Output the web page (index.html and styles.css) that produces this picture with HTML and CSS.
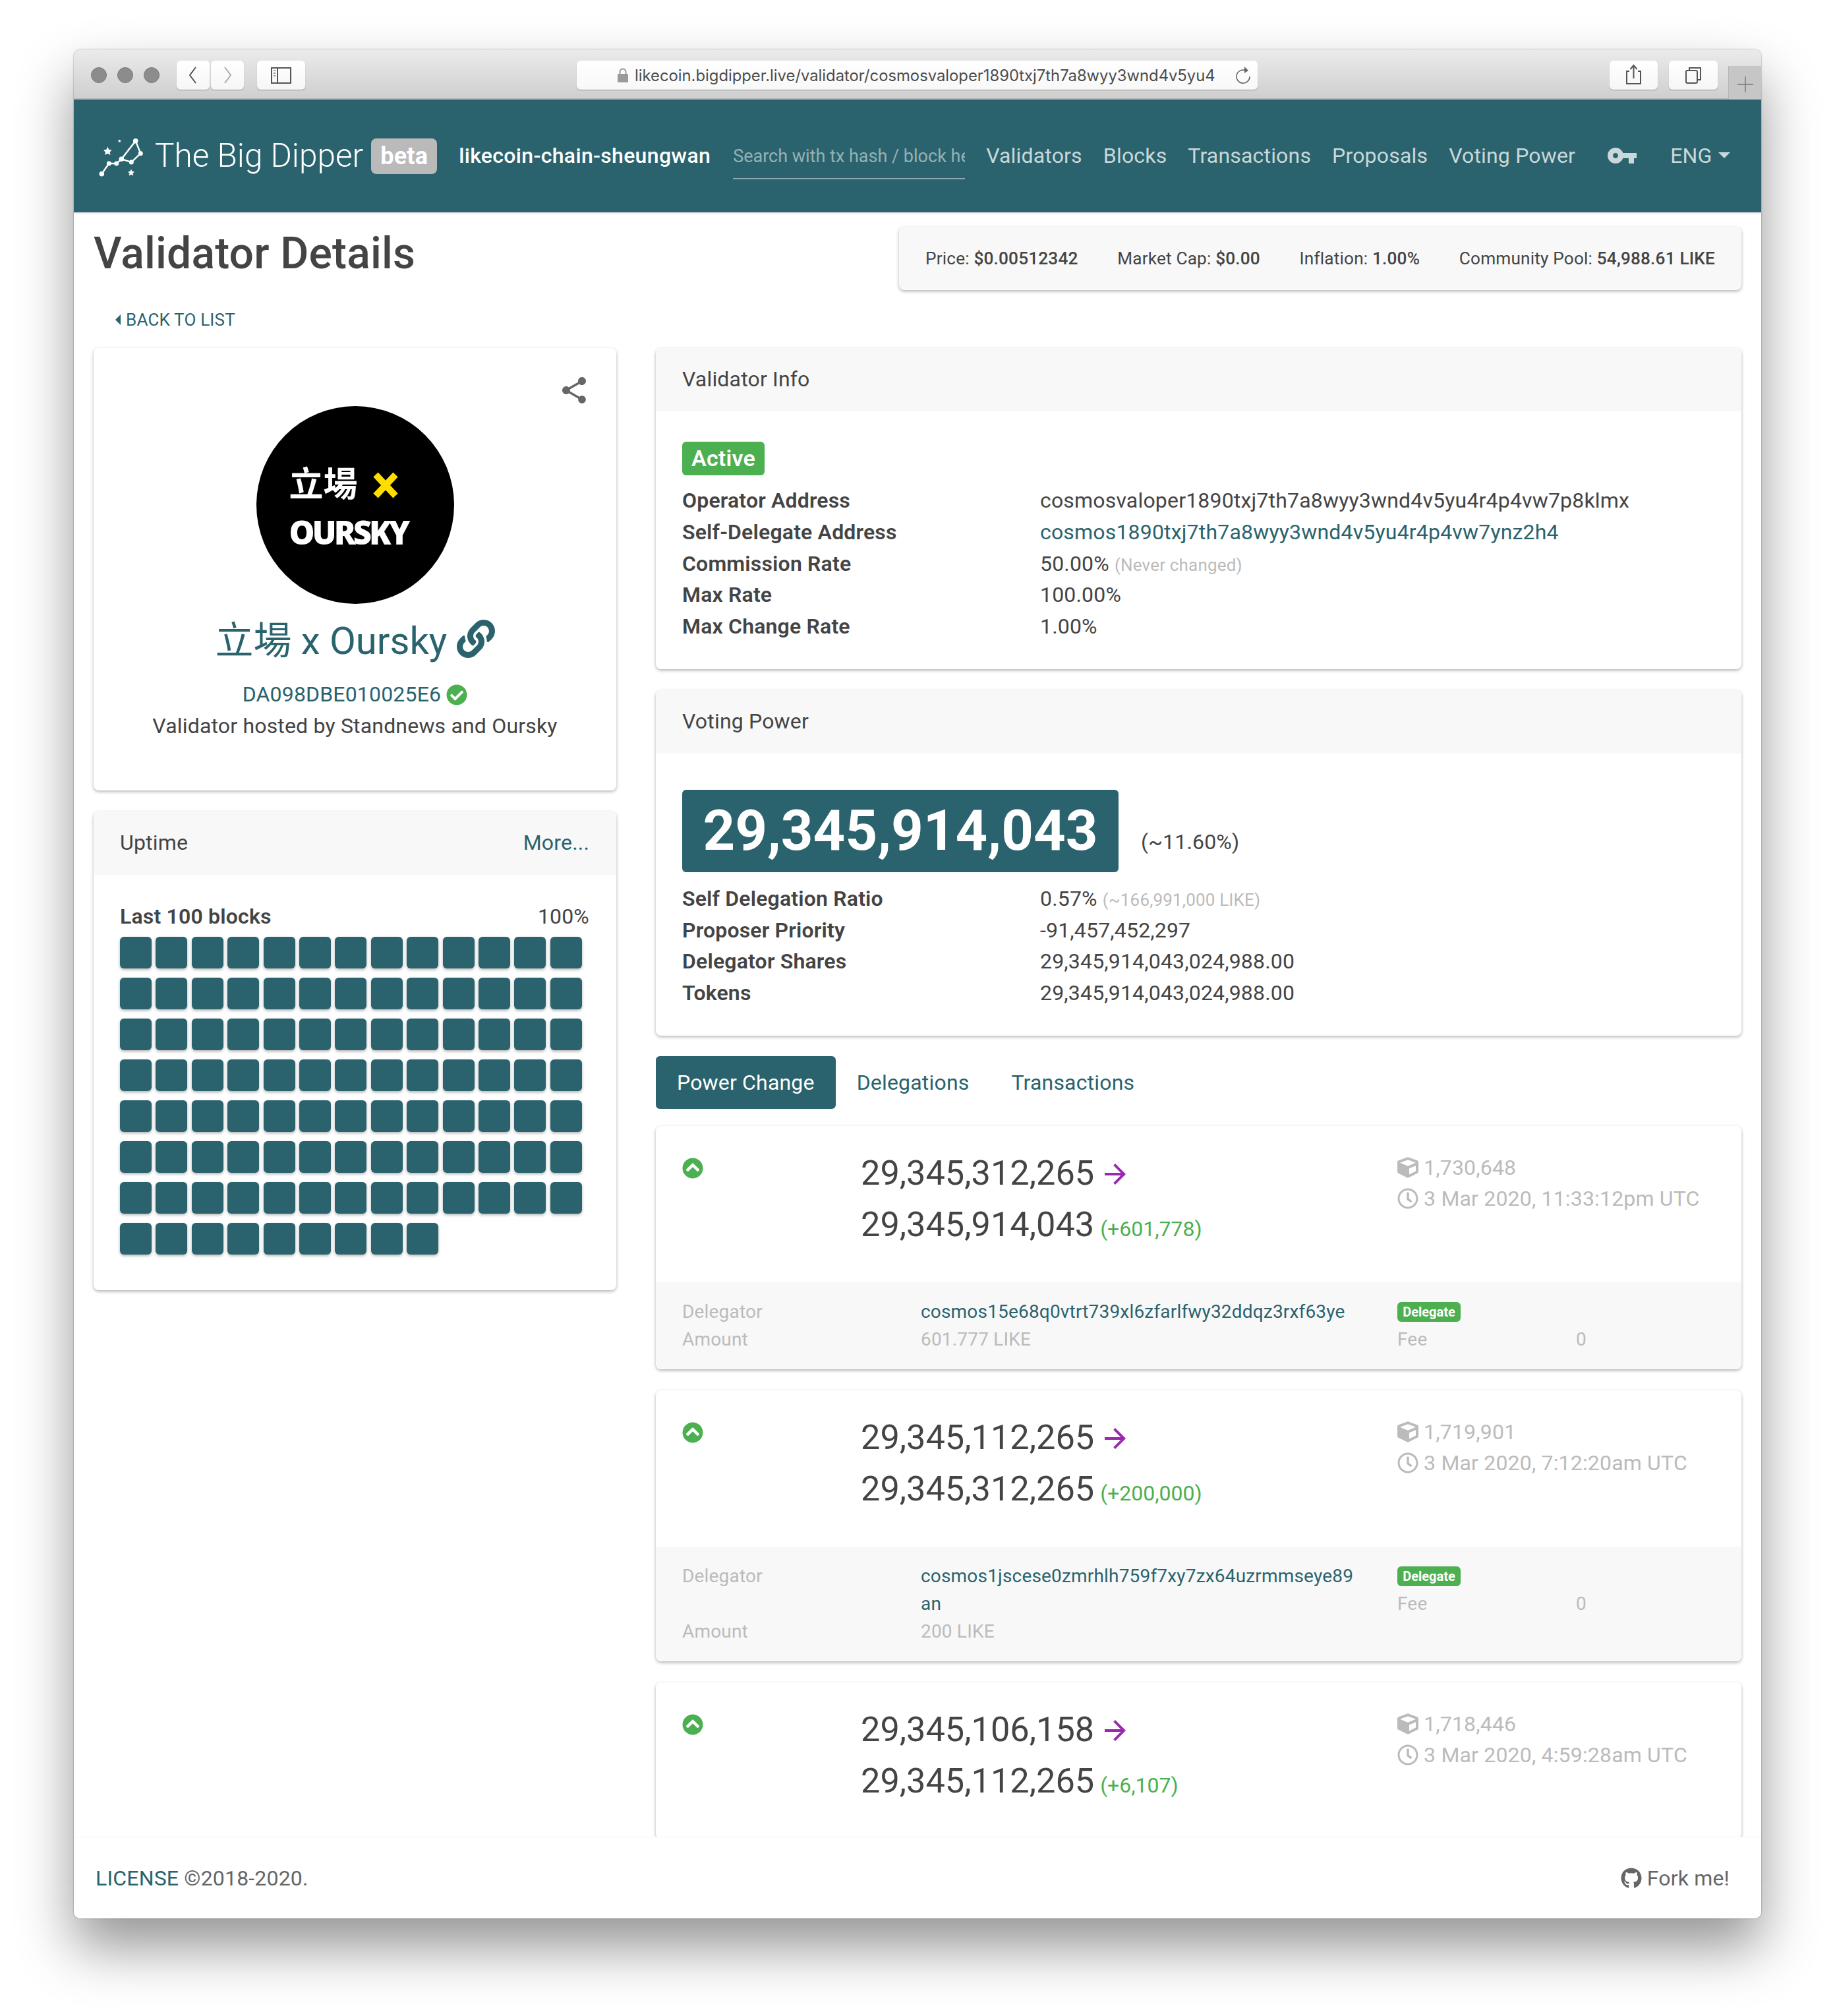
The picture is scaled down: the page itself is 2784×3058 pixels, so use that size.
FILE: index.html
```html
<!DOCTYPE html>
<html lang="en">
<head>
<meta charset="utf-8">
<title>Validator Details</title>
<link rel="stylesheet" href="styles.css">
</head>
<body>
<div class="window">
  <div class="toolbar">
    <div class="lights"><i></i><i></i><i></i></div>
    <div class="tb-btn tb-back"><svg width="50" height="44" viewBox="0 0 50 44"><path d="M29 10 L20 22 L29 34" fill="none" stroke="#555" stroke-width="2"/></svg></div>
    <div class="tb-btn tb-fwd"><svg width="50" height="44" viewBox="0 0 50 44"><path d="M21 10 L30 22 L21 34" fill="none" stroke="#aaa" stroke-width="2"/></svg></div>
    <div class="tb-btn tb-side"><svg width="73" height="44" viewBox="0 0 73 44"><rect x="22" y="11" width="29" height="23" fill="none" stroke="#555" stroke-width="2"/><path d="M31 11 V34" stroke="#555" stroke-width="2"/><path d="M25 15 H28 M25 19 H28 M25 23 H28" stroke="#999" stroke-width="2"/></svg></div>
    <div class="address">
      <svg class="lock" width="16" height="22" viewBox="0 0 16 22"><rect x="0" y="9" width="16" height="13" rx="1" fill="#9a9a9a"/><path d="M3.5 9 V6 a4.5 4.5 0 0 1 9 0 V9" fill="none" stroke="#9a9a9a" stroke-width="2"/></svg>
      <span class="url">likecoin.bigdipper.live/validator/cosmosvaloper1890txj7th7a8wyy3wnd4v5yu4r4p4vw7p8klmx</span>
      <svg class="reload" width="24" height="28" viewBox="0 0 24 28"><path d="M15 7 A10 10 0 1 0 21 16" fill="none" stroke="#666" stroke-width="1.6"/><path d="M13 1 L19 7 L13 11 Z" fill="#666"/></svg>
    </div>
    <div class="tb-btn tb-share"><svg width="73" height="44" viewBox="0 0 73 44"><path d="M30 16 H26 V35 H47 V16 H43" fill="none" stroke="#555" stroke-width="2"/><path d="M36.5 27 V8 M31.500 13 L36.500 7 L41.500 13" fill="none" stroke="#555" stroke-width="2"/></svg></div>
    <div class="tb-btn tb-tabs"><svg width="74" height="44" viewBox="0 0 74 44"><rect x="26" y="15" width="17" height="19" rx="2" fill="none" stroke="#555" stroke-width="2"/><path d="M31 15 V11 H48 V29 H43" fill="none" stroke="#555" stroke-width="2"/></svg></div>
    <div class="tb-plus"><svg width="24" height="24" viewBox="0 0 24 24"><path d="M12 0 V24 M0 12 H24" stroke="#777" stroke-width="1.500"/></svg></div>
  </div>

  <nav class="nav">
    <svg class="logo" width="90" height="80" viewBox="0 0 90 80">
      <path d="M14.300 66.700 L25.300 51 H36.700 L44.300 44.300 L65.700 16.700 L73.300 35.700 L59.300 49 L44.300 44.300" fill="none" stroke="#fff" stroke-width="2.400"/>
      <g fill="#fff"><circle cx="65.700" cy="16.700" r="3.800"/><circle cx="73.300" cy="35.700" r="3.500"/><circle cx="59.300" cy="49" r="3.500"/><circle cx="44.300" cy="44.300" r="3.800"/><circle cx="36.700" cy="51" r="3.500"/><circle cx="25.300" cy="51" r="3.500"/><circle cx="14.300" cy="66.700" r="3.800"/>
      <path d="M23.300 25.500 L25.300 30 L29.500 30.500 L26.500 34 L27.500 38 L23.300 36 L19 38 L20 34 L17 30.500 L21.300 30 Z"/>
      <path d="M41.300 14.500 L42.100 16 L43.800 16.300 L42.600 17.500 L42.900 19 L41.300 18.300 L39.700 19 L40 17.500 L38.800 16.300 L40.500 16 Z"/>
      <path d="M59 59.500 L60.500 63 L64 63.500 L61.500 66 L62.300 69.500 L59 67.800 L55.700 69.500 L56.500 66 L54 63.500 L57.500 63 Z"/></g>
    </svg>
    <span class="brand">The Big Dipper</span>
    <span class="beta">beta</span>
    <span class="chain">likecoin-chain-sheungwan</span>
    <div class="search"><span>Search with tx hash / block height</span></div>
    <a class="nl nl-validators">Validators</a>
    <a class="nl">Blocks</a>
    <a class="nl">Transactions</a>
    <a class="nl">Proposals</a>
    <a class="nl">Voting Power</a>
    <svg class="key" width="48" height="48" viewBox="0 0 24 24"><path d="M12.650 10C11.830 7.670 9.610 6 7 6c-3.310 0-6 2.690-6 6s2.690 6 6 6c2.610 0 4.830-1.670 5.650-4H17v4h4v-4h2v-4H12.650zM7 14c-1.100 0-2-.9-2-2s.9-2 2-2 2 .9 2 2-.9 2-2 2z"/></svg>
    <a class="nl lang">ENG<i class="caret"></i></a>
  </nav>

  <main class="main">
    <div class="head">
      <h1 class="title">Validator Details</h1>
      <div class="stats">
        <span>Price: <b>$0.00512342</b></span>
        <span>Market Cap: <b>$0.00</b></span>
        <span>Inflation: <b>1.00%</b></span>
        <span>Community Pool: <b>54,988.61 LIKE</b></span>
      </div>
    </div>
    <a class="back"><i class="back-caret"></i>BACK TO LIST</a>

    <div class="columns">
      <div class="col-left">
        <section class="card profile">
          <svg class="share" width="48" height="48" viewBox="0 0 24 24"><path d="M18 16.080c-.76 0-1.440.3-1.960.77L8.910 12.700c.05-.23.09-.46.09-.7s-.04-.47-.09-.7l7.050-4.110c.54.5 1.250.81 2.040.81 1.660 0 3-1.340 3-3s-1.340-3-3-3-3 1.340-3 3c0 .24.04.47.09.7L8.040 9.810C7.500 9.310 6.790 9 6 9c-1.660 0-3 1.340-3 3s1.340 3 3 3c.79 0 1.500-.31 2.040-.81l7.120 4.160c-.05.21-.08.43-.08.65 0 1.610 1.310 2.920 2.920 2.920 1.610 0 2.920-1.310 2.920-2.920s-1.310-2.920-2.920-2.920z"/></svg>
          <div class="avatar">
            <div class="av-top"><span>立場</span><svg width="40" height="42" viewBox="0 0 40 42"><path d="M5 5 L35 37 M35 5 L5 37" stroke="#ffdd00" stroke-width="10"/></svg></div>
            <div class="av-bottom">OURSKY</div>
          </div>
          <h3 class="vname">立場 x Oursky <svg class="link" width="58" height="58" viewBox="0 0 512 512"><path d="M326.612 185.391c59.747 59.809 58.927 155.698.36 214.590-.11.12-.24.25-.36.37l-67.200 67.200c-59.270 59.270-155.699 59.262-214.960 0-59.270-59.260-59.270-155.700 0-214.960l37.106-37.106c9.840-9.840 26.786-3.300 27.294 10.606.648 17.722 3.826 35.527 9.690 52.721 1.986 5.822.567 12.262-3.783 16.612l-13.087 13.087c-28.026 28.026-28.905 73.660-1.155 101.960 28.024 28.579 74.086 28.749 102.325.51l67.200-67.190c28.191-28.191 28.073-73.757 0-101.830-3.701-3.694-7.429-6.564-10.341-8.569a16.037 16.037 0 0 1-6.947-12.606c-.396-10.567 3.348-21.456 11.698-29.806l21.054-21.055c5.521-5.521 14.182-6.199 20.584-1.731a152.482 152.482 0 0 1 20.522 17.197zM467.547 44.449c-59.261-59.262-155.690-59.270-214.960 0l-67.200 67.200c-.12.12-.25.25-.36.37-58.566 58.892-59.387 154.781.36 214.590a152.454 152.454 0 0 0 20.521 17.196c6.402 4.468 15.064 3.789 20.584-1.731l21.054-21.055c8.350-8.350 12.094-19.239 11.698-29.806a16.037 16.037 0 0 0-6.947-12.606c-2.912-2.005-6.640-4.875-10.341-8.569-28.073-28.073-28.191-73.639 0-101.830l67.200-67.190c28.239-28.239 74.300-28.069 102.325.51 27.750 28.300 26.872 73.934-1.155 101.960l-13.087 13.087c-4.350 4.350-5.769 10.790-3.783 16.612 5.864 17.194 9.042 34.999 9.690 52.721.509 13.906 17.454 20.446 27.294 10.606l37.106-37.106c59.271-59.259 59.271-155.699.001-214.959z"/></svg></h3>
          <div class="vaddr">DA098DBE010025E6 <svg class="check" width="32" height="32" viewBox="0 0 512 512"><path d="M504 256c0 136.967-111.033 248-248 248S8 392.967 8 256 119.033 8 256 8s248 111.033 248 248zM227.314 387.314l184-184c6.248-6.248 6.248-16.379 0-22.627l-22.627-22.627c-6.248-6.249-16.379-6.249-22.628 0L216 308.118l-70.059-70.059c-6.248-6.248-16.379-6.248-22.628 0l-22.627 22.627c-6.248 6.248-6.248 16.379 0 22.627l104 104c6.249 6.249 16.379 6.249 22.628.001z"/></svg></div>
          <div class="vdesc">Validator hosted by Standnews and Oursky</div>
        </section>

        <section class="card uptime">
          <header class="card-head split"><span>Uptime</span><a class="teal">More...</a></header>
          <div class="uptime-body">
            <div class="uptime-line"><b>Last 100 blocks</b><span>100%</span></div>
            <div class="blocks">
              <i></i><i></i><i></i><i></i><i></i><i></i><i></i><i></i><i></i><i></i><i></i><i></i><i></i>
              <i></i><i></i><i></i><i></i><i></i><i></i><i></i><i></i><i></i><i></i><i></i><i></i><i></i>
              <i></i><i></i><i></i><i></i><i></i><i></i><i></i><i></i><i></i><i></i><i></i><i></i><i></i>
              <i></i><i></i><i></i><i></i><i></i><i></i><i></i><i></i><i></i><i></i><i></i><i></i><i></i>
              <i></i><i></i><i></i><i></i><i></i><i></i><i></i><i></i><i></i><i></i><i></i><i></i><i></i>
              <i></i><i></i><i></i><i></i><i></i><i></i><i></i><i></i><i></i><i></i><i></i><i></i><i></i>
              <i></i><i></i><i></i><i></i><i></i><i></i><i></i><i></i><i></i><i></i><i></i><i></i><i></i>
              <i></i><i></i><i></i><i></i><i></i><i></i><i></i><i></i><i></i>
            </div>
          </div>
        </section>
      </div>

      <div class="col-right">
        <section class="card">
          <header class="card-head">Validator Info</header>
          <div class="card-body info-body">
            <span class="status">Active</span>
            <dl class="rows">
              <dt>Operator Address</dt><dd>cosmosvaloper1890txj7th7a8wyy3wnd4v5yu4r4p4vw7p8klmx</dd>
              <dt>Self-Delegate Address</dt><dd class="teal">cosmos1890txj7th7a8wyy3wnd4v5yu4r4p4vw7ynz2h4</dd>
              <dt>Commission Rate</dt><dd>50.00% <small>(Never changed)</small></dd>
              <dt>Max Rate</dt><dd>100.00%</dd>
              <dt>Max Change Rate</dt><dd>1.00%</dd>
            </dl>
          </div>
        </section>

        <section class="card">
          <header class="card-head">Voting Power</header>
          <div class="card-body power-body">
            <div class="power-line"><span class="power-badge">29,345,914,043</span><span class="power-pct">(~11.60%)</span></div>
            <dl class="rows">
              <dt>Self Delegation Ratio</dt><dd>0.57% <small>(~166,991,000 LIKE)</small></dd>
              <dt>Proposer Priority</dt><dd>-91,457,452,297</dd>
              <dt>Delegator Shares</dt><dd>29,345,914,043,024,988.00</dd>
              <dt>Tokens</dt><dd>29,345,914,043,024,988.00</dd>
            </dl>
          </div>
        </section>

        <div class="tabs"><a class="tab active">Power Change</a><a class="tab">Delegations</a><a class="tab">Transactions</a></div>

        <section class="card pc">
          <div class="pc-top">
            <svg class="up" width="32" height="32" viewBox="0 0 512 512"><path d="M8 256C8 119 119 8 256 8s248 111 248 248-111 248-248 248S8 393 8 256zm231-113.900L103.500 277.600c-9.400 9.400-9.400 24.600 0 33.900l17 17c9.400 9.400 24.600 9.400 33.900 0L256 226.900l101.600 101.600c9.400 9.400 24.600 9.400 33.900 0l17-17c9.400-9.400 9.400-24.600 0-33.900L273 142.100c-9.400-9.400-24.600-9.400-34 0z"/></svg>
            <div class="nums">
              <div>29,345,312,265 <svg class="arrow" width="48" height="48" viewBox="0 0 24 24"><path d="M12 4l-1.410 1.410L16.170 11H4v2h12.170l-5.580 5.590L12 20l8-8z"/></svg></div>
              <div>29,345,914,043 <small class="delta">(+601,778)</small></div>
            </div>
            <div class="meta">
              <div><svg width="32" height="32" viewBox="0 0 512 512"><path d="M239.100 6.300l-208 78c-18.700 7-31.100 25-31.100 45v225.100c0 18.200 10.300 34.800 26.500 42.900l208 104c13.500 6.800 29.400 6.800 42.900 0l208-104c16.300-8.100 26.500-24.800 26.500-42.900V129.300c0-20-12.400-37.900-31.100-44.900l-208-78C262 2.200 250 2.200 239.100 6.300zM256 68.400l192 72v1.100l-192 78-192-78v-1.100l192-72zm32 356V275.500l160-65v133.900l-160 80z"/></svg> 1,730,648</div>
              <div><svg width="32" height="32" viewBox="0 0 512 512"><path d="M256 8C119 8 8 119 8 256s111 248 248 248 248-111 248-248S393 8 256 8zm0 448c-110.500 0-200-89.500-200-200S145.500 56 256 56s200 89.500 200 200-89.500 200-200 200zm61.800-104.400l-84.900-61.700c-3.100-2.300-4.900-5.900-4.900-9.700V116c0-6.600 5.400-12 12-12h32c6.600 0 12 5.400 12 12v141.700l66.800 48.600c5.400 3.900 6.500 11.400 2.600 16.800L334.600 349c-3.900 5.300-11.400 6.500-16.800 2.600z"/></svg> 3 Mar 2020, 11:33:12pm UTC</div>
            </div>
          </div>
          <div class="pc-foot">
            <div class="foot-left">
              <span>Delegator</span><a class="teal">cosmos15e68q0vtrt739xl6zfarlfwy32ddqz3rxf63ye</a>
              <span>Amount</span><span>601.777 LIKE</span>
            </div>
            <div class="foot-right">
              <span class="tag">Delegate</span><span></span>
              <span>Fee</span><span>0</span>
            </div>
          </div>
        </section>

        <section class="card pc">
          <div class="pc-top">
            <svg class="up" width="32" height="32" viewBox="0 0 512 512"><path d="M8 256C8 119 119 8 256 8s248 111 248 248-111 248-248 248S8 393 8 256zm231-113.900L103.500 277.600c-9.400 9.400-9.400 24.600 0 33.900l17 17c9.400 9.400 24.600 9.400 33.900 0L256 226.900l101.600 101.600c9.400 9.400 24.600 9.400 33.900 0l17-17c9.400-9.400 9.400-24.600 0-33.900L273 142.100c-9.400-9.400-24.600-9.400-34 0z"/></svg>
            <div class="nums">
              <div>29,345,112,265 <svg class="arrow" width="48" height="48" viewBox="0 0 24 24"><path d="M12 4l-1.410 1.410L16.170 11H4v2h12.170l-5.580 5.590L12 20l8-8z"/></svg></div>
              <div>29,345,312,265 <small class="delta">(+200,000)</small></div>
            </div>
            <div class="meta">
              <div><svg width="32" height="32" viewBox="0 0 512 512"><path d="M239.100 6.300l-208 78c-18.700 7-31.100 25-31.100 45v225.100c0 18.200 10.300 34.800 26.500 42.900l208 104c13.500 6.800 29.400 6.800 42.900 0l208-104c16.300-8.100 26.500-24.800 26.500-42.900V129.300c0-20-12.400-37.900-31.100-44.900l-208-78C262 2.200 250 2.200 239.100 6.300zM256 68.400l192 72v1.100l-192 78-192-78v-1.100l192-72zm32 356V275.500l160-65v133.900l-160 80z"/></svg> 1,719,901</div>
              <div><svg width="32" height="32" viewBox="0 0 512 512"><path d="M256 8C119 8 8 119 8 256s111 248 248 248 248-111 248-248S393 8 256 8zm0 448c-110.500 0-200-89.500-200-200S145.500 56 256 56s200 89.500 200 200-89.500 200-200 200zm61.800-104.400l-84.900-61.700c-3.100-2.300-4.900-5.900-4.900-9.700V116c0-6.600 5.400-12 12-12h32c6.600 0 12 5.400 12 12v141.700l66.800 48.600c5.400 3.900 6.500 11.400 2.600 16.800L334.600 349c-3.900 5.300-11.400 6.500-16.800 2.600z"/></svg> 3 Mar 2020, 7:12:20am UTC</div>
            </div>
          </div>
          <div class="pc-foot">
            <div class="foot-left">
              <span>Delegator</span><a class="teal">cosmos1jscese0zmrhlh759f7xy7zx64uzrmmseye89an</a>
              <span>Amount</span><span>200 LIKE</span>
            </div>
            <div class="foot-right">
              <span class="tag">Delegate</span><span></span>
              <span>Fee</span><span>0</span>
            </div>
          </div>
        </section>

        <section class="card pc">
          <div class="pc-top">
            <svg class="up" width="32" height="32" viewBox="0 0 512 512"><path d="M8 256C8 119 119 8 256 8s248 111 248 248-111 248-248 248S8 393 8 256zm231-113.900L103.500 277.600c-9.400 9.400-9.400 24.600 0 33.900l17 17c9.400 9.400 24.600 9.400 33.900 0L256 226.900l101.600 101.600c9.400 9.400 24.600 9.400 33.900 0l17-17c9.400-9.400 9.400-24.600 0-33.900L273 142.100c-9.400-9.400-24.600-9.400-34 0z"/></svg>
            <div class="nums">
              <div>29,345,106,158 <svg class="arrow" width="48" height="48" viewBox="0 0 24 24"><path d="M12 4l-1.410 1.410L16.170 11H4v2h12.170l-5.580 5.590L12 20l8-8z"/></svg></div>
              <div>29,345,112,265 <small class="delta">(+6,107)</small></div>
            </div>
            <div class="meta">
              <div><svg width="32" height="32" viewBox="0 0 512 512"><path d="M239.100 6.300l-208 78c-18.700 7-31.100 25-31.100 45v225.100c0 18.200 10.300 34.800 26.500 42.900l208 104c13.500 6.800 29.400 6.800 42.900 0l208-104c16.300-8.100 26.500-24.800 26.500-42.900V129.300c0-20-12.400-37.900-31.100-44.900l-208-78C262 2.200 250 2.200 239.100 6.300zM256 68.400l192 72v1.100l-192 78-192-78v-1.100l192-72zm32 356V275.500l160-65v133.900l-160 80z"/></svg> 1,718,446</div>
              <div><svg width="32" height="32" viewBox="0 0 512 512"><path d="M256 8C119 8 8 119 8 256s111 248 248 248 248-111 248-248S393 8 256 8zm0 448c-110.500 0-200-89.500-200-200S145.500 56 256 56s200 89.500 200 200-89.500 200-200 200zm61.800-104.400l-84.900-61.700c-3.100-2.300-4.900-5.900-4.900-9.700V116c0-6.600 5.400-12 12-12h32c6.600 0 12 5.400 12 12v141.700l66.800 48.600c5.400 3.900 6.500 11.400 2.600 16.800L334.600 349c-3.900 5.300-11.400 6.500-16.800 2.600z"/></svg> 3 Mar 2020, 4:59:28am UTC</div>
            </div>
          </div>
        </section>
      </div>
    </div>
  </main>

  <footer class="footer">
    <div><a class="teal">LICENSE</a> ©2018-2020.</div>
    <div class="fork"><svg width="32" height="32" viewBox="0 0 496 512"><path d="M165.900 397.400c0 2-2.300 3.600-5.200 3.600-3.300 0-5.600-1.600-5.600-3.600 0-2 2.300-3.600 5.200-3.600 3-.3 5.600 1.300 5.600 3.600zm-31.100-4.500c-.7 2 1.300 4.300 4.300 4.900 2.600 1 5.600 0 6.200-2s-1.300-4.300-4.300-5.200c-2.600-.7-5.500.3-6.200 2.300zm44.200-1.700c-2.900.7-4.900 2.600-4.600 4.900.3 2 2.900 3.300 5.900 2.600 2.900-.7 4.900-2.600 4.600-4.600-.3-1.900-3-3.200-5.900-2.900zM244.800 8C106.100 8 0 113.300 0 252c0 110.900 69.800 205.800 169.500 239.200 12.800 2.300 17.300-5.600 17.300-12.100 0-6.200-.3-40.400-.3-61.400 0 0-70 15-84.700-29.800 0 0-11.400-29.100-27.800-36.600 0 0-22.900-15.700 1.600-15.400 0 0 24.900 2 38.600 25.800 21.900 38.600 58.600 27.500 72.900 20.900 2.300-16 8.800-27.100 16-33.700-55.900-6.200-112.300-14.300-112.300-110.500 0-27.500 7.600-41.300 23.600-58.900-2.600-6.500-11.100-33.300 2.600-67.900 20.900-6.500 69 27 69 27 20-5.600 41.500-8.500 62.800-8.500s42.800 2.900 62.800 8.500c0 0 48.100-33.600 69-27 13.700 34.700 5.200 61.400 2.600 67.900 16 17.700 25.800 31.500 25.800 58.900 0 96.500-58.900 104.200-114.800 110.500 9.200 7.900 17 22.900 17 46.400 0 33.700-.3 75.400-.3 83.600 0 6.500 4.600 14.400 17.300 12.100C428.200 457.800 496 362.900 496 252 496 113.300 383.500 8 244.800 8z"/></svg> Fork me!</div>
  </footer>
</div>
</body>
</html>
```
FILE: styles.css
```css
* { box-sizing: border-box; }
html, body { margin: 0; padding: 0; }
body {
  width: 2784px;
  height: 3058px;
  background: #fff;
  overflow: hidden;
  padding: 75px 112px 0;
  font-family: Roboto, "Noto Sans CJK TC", sans-serif;
  font-size: 32px;
  font-weight: 400;
  line-height: 48px;
  letter-spacing: .18px;
  color: #444;
}
a { text-decoration: none; }
.teal { color: #2a636d; }
.window {
  width: 2560px;
  height: 2835px;
  background: #fff;
  border-radius: 10px;
  overflow: hidden;
  display: flex;
  flex-direction: column;
  box-shadow: 0 44px 84px rgba(0,0,0,.42), 0 0 2px rgba(0,0,0,.5);
}

/* browser chrome */
.toolbar {
  height: 76px;
  flex: none;
  display: flex;
  align-items: flex-start;
  padding: 17px 0 0 26px;
  background: linear-gradient(#ebebeb, #cfcfcf);
  border-bottom: 2px solid #b8b8b8;
  position: relative;
}
.lights { display: flex; gap: 16px; margin-top: 10px; margin-right: 26px; }
.lights i { width: 24px; height: 24px; border-radius: 50%; background: #8c8c8c; border: 1px solid #7a7a7a; }
.tb-btn {
  height: 44px;
  background: linear-gradient(#fff, #f6f6f6);
  border-radius: 6px;
  box-shadow: 0 1px 1px rgba(0,0,0,.3);
}
.tb-btn svg { display: block; }
.tb-back { width: 50px; }
.tb-fwd { width: 50px; margin-left: 2px; }
.tb-side { width: 73px; margin-left: 20px; }
.tb-share { width: 73px; margin-left: 534px; }
.tb-tabs { width: 74px; margin-left: 17px; }
.address {
  width: 1033px;
  height: 44px;
  margin-left: 412px;
  padding-left: 62px;
  display: flex;
  align-items: center;
  gap: 10px;
  background: linear-gradient(#fff, #f8f8f8);
  border-radius: 6px;
  box-shadow: 0 1px 1px rgba(0,0,0,.3);
}
.url {
  width: 880px;
  flex: none;
  margin-top: 2px;
  overflow: hidden;
  white-space: nowrap;
  font-family: Inter, sans-serif;
  font-size: 23.800px;
  letter-spacing: 0;
  line-height: 44px;
  color: #4d4d4d;
}
.lock { flex: none; }
.reload { flex: none; margin-left: 22px; }
.tb-plus {
  position: absolute;
  right: 0;
  top: 25px;
  width: 50px;
  height: 51px;
  background: #c6c6c6;
  border-left: 1px solid #b5b5b5;
  display: flex;
  align-items: center;
  justify-content: center;
  padding-top: 4px;
}

/* nav */
.nav {
  height: 171px;
  flex: none;
  display: flex;
  align-items: center;
  background: #2a636d;
  color: #fff;
  padding-left: 28px;
  padding-bottom: 2px;
  box-shadow: 0 1px 2px rgba(0,0,0,.25);
  position: relative;
  z-index: 2;
}
.logo { flex: none; margin-top: 2px; }
.brand { font-size: 49.500px; font-weight: 300; line-height: 60px; margin-left: 5px; white-space: nowrap; letter-spacing: 0; }
.beta {
  width: 100px;
  height: 54px;
  margin-left: 12px;
  margin-top: 2px;
  background: #bababa;
  border-radius: 8px;
  text-align: center;
  font-size: 36px;
  font-weight: 700;
  line-height: 54px;
}
.chain { margin-left: 33px; font-weight: 500; white-space: nowrap; letter-spacing: .33px; }
.search {
  width: 352px;
  height: 69px;
  margin-left: 34px;
  margin-top: 3px;
  padding-top: 10px;
  border-bottom: 2px solid rgba(255,255,255,.45);
  overflow: hidden;
  white-space: nowrap;
  font-size: 27px;
  letter-spacing: 0;
  color: rgba(255,255,255,.5);
  font-weight: 400;
}
.nl { color: rgba(255,255,255,.75); margin-left: 32px; white-space: nowrap; }
.nl-validators { margin-left: 32px; }
.key { fill: rgba(255,255,255,.75); margin-left: 47px; flex: none; }
.lang { margin-left: 49px; display: flex; align-items: center; }
.caret {
  width: 0; height: 0; margin-left: 9px;
  border-left: 9px solid transparent;
  border-right: 9px solid transparent;
  border-top: 9px solid rgba(255,255,255,.75);
}

/* main */
.main { flex: 1; min-height: 0; overflow: hidden; padding: 0 30px; }
.head { display: flex; justify-content: space-between; align-items: flex-start; height: 143px; padding-top: 23px; }
.title { margin: 0; font-size: 66px; line-height: 80px; font-weight: 500; color: #444; }
.stats {
  width: 1278px;
  height: 96px;
  margin-top: -1px;
  padding: 0 40px;
  display: flex;
  align-items: center;
  justify-content: space-between;
  background: #f8f8f8;
  border-radius: 8px;
  box-shadow: 0 2px 5px rgba(0,0,0,.3);
  font-size: 26.200px;
  white-space: nowrap;
}
.stats b { font-weight: 500; }
.back {
  display: flex;
  align-items: center;
  height: 40px;
  margin: 0 0 23px 33px;
  font-size: 26px;
  line-height: 40px;
  color: #2a636d;
}
.back-caret {
  width: 0; height: 0; margin-right: 8px;
  border-top: 8px solid transparent;
  border-bottom: 8px solid transparent;
  border-right: 8px solid #2a636d;
}
.columns { display: flex; gap: 60px; align-items: flex-start; }
.col-left { width: 793px; flex: none; display: flex; flex-direction: column; gap: 32px; }
.col-right { flex: 1; min-width: 0; display: flex; flex-direction: column; gap: 32px; }
.card {
  background: #fff;
  border-radius: 8px;
  box-shadow: 0 2px 5px rgba(0,0,0,.3);
  overflow: hidden;
  position: relative;
}
.card-head {
  height: 96px;
  padding: 0 40px;
  background: #f8f8f8;
  line-height: 94px;
}
.split { display: flex; justify-content: space-between; padding: 0 41px 0 40px; }

/* profile */
.profile { padding: 88px 0 74px; text-align: center; }
.share { position: absolute; top: 40px; right: 40px; fill: #666; }
.avatar {
  width: 300px;
  height: 300px;
  margin: 0 auto;
  padding: 92px 0 0 50px;
  border-radius: 50%;
  background: #000;
  color: #fff;
  text-align: left;
}
.av-top { display: flex; align-items: center; gap: 22px; height: 56px; font-size: 52px; font-weight: 700; line-height: 56px; letter-spacing: 0; }
.av-top svg { flex: none; }
.av-bottom { margin-top: 15px; font-family: "Open Sans", sans-serif; font-size: 49px; font-weight: 800; line-height: 56px; letter-spacing: -4px; }
.vname { margin: 22px 0 0; font-size: 58px; font-weight: 400; line-height: 68px; color: #2a636d; letter-spacing: 0; }
.link { fill: #2a636d; vertical-align: -6px; }
.vaddr { margin-top: 23px; color: #2a636d; }
.check { fill: #4caf50; vertical-align: -6px; }

/* uptime */
.uptime-body { padding: 39px 41px 54px 40px; }
.uptime-line { display: flex; justify-content: space-between; }
.uptime-line b { font-weight: 600; }
.blocks { display: flex; flex-wrap: wrap; gap: 14px 6.400px; margin-top: 7px; }
.blocks i { width: 48px; height: 48px; background: #2a636d; border-radius: 6px; box-shadow: 0 2px 4px rgba(0,0,0,.3); }

/* info */
.card-body { padding: 0 40px; }
.info-body { padding-top: 46px; padding-bottom: 41px; }
.status {
  display: block;
  width: 125px;
  height: 51px;
  background: #4caf50;
  border-radius: 6px;
  color: #fff;
  text-align: center;
  font-size: 34px;
  font-weight: 600;
  line-height: 51px;
}
.rows { display: grid; grid-template-columns: 543px 1fr; grid-auto-rows: 47.750px; margin: 14px 0 0; }
.rows dt { font-weight: 600; }
.rows dd { margin: 0; }
.rows small { font-size: 26px; line-height: 1; color: #bbb; }
.power-body { padding-top: 55px; padding-bottom: 41px; }
.power-line { display: flex; align-items: flex-end; gap: 34px; }
.power-badge {
  width: 662px;
  height: 125px;
  background: #2a636d;
  border-radius: 6px;
  color: #fff;
  text-align: center;
  font-size: 85px;
  font-weight: 700;
  line-height: 125px;
  letter-spacing: 0;
}
.power-pct { line-height: 48px; margin-bottom: 22px; }
.power-body .rows { margin-top: 16px; }

/* tabs */
.tabs { display: flex; margin-top: -1px; margin-bottom: -6px; }
.tab { height: 80px; padding: 0 32px; line-height: 80px; color: #2a636d; }
.tab.active { background: #2a636d; color: #fff; border-radius: 6px; }

/* power change cards */
.pc-top {
  display: grid;
  grid-template-columns: 271px 814px 1fr;
  padding: 32px 0 49px 40px;
}
.up { fill: #4caf50; margin-top: 16px; display: block; }
.nums { font-size: 52.300px; line-height: 78px; white-space: nowrap; letter-spacing: 0; }
.nums > div { height: 78px; }
.arrow { fill: #9c27b0; vertical-align: -8px; margin-left: -5px; }
.delta { font-size: 32px; line-height: 1; color: #4caf50; margin-left: -4px; }
.meta { padding-top: 8px; color: #bbb; line-height: 47.500px; white-space: nowrap; }
.meta > div { height: 47.500px; }
.meta svg { fill: #bbb; vertical-align: -5px; }
.pc-foot {
  display: flex;
  gap: 60px;
  padding: 24px 0 24px 40px;
  background: #f8f8f8;
  font-size: 28px;
  line-height: 42px;
  color: #bbb;
}
.foot-left { width: 1025px; flex: none; display: grid; grid-template-columns: 362px 663px; align-content: start; }
.foot-left a { word-break: break-all; }
.foot-right { display: grid; grid-template-columns: 271px 1fr; grid-auto-rows: 42px; align-content: start; }
.tag {
  justify-self: start;
  align-self: center;
  width: 96px;
  height: 30px;
  background: #4caf50;
  border-radius: 6px;
  color: #fff;
  text-align: center;
  font-size: 20px;
  font-weight: 700;
  line-height: 30px;
  letter-spacing: 0;
}

/* footer */
.footer {
  height: 124px;
  flex: none;
  display: flex;
  justify-content: space-between;
  align-items: center;
  padding: 0 48px 0 33px;
  background: #fff;
  border-top: 1px solid #f5f5f5;
  color: #666;
}
.fork svg { fill: #666; vertical-align: -5px; }
```
